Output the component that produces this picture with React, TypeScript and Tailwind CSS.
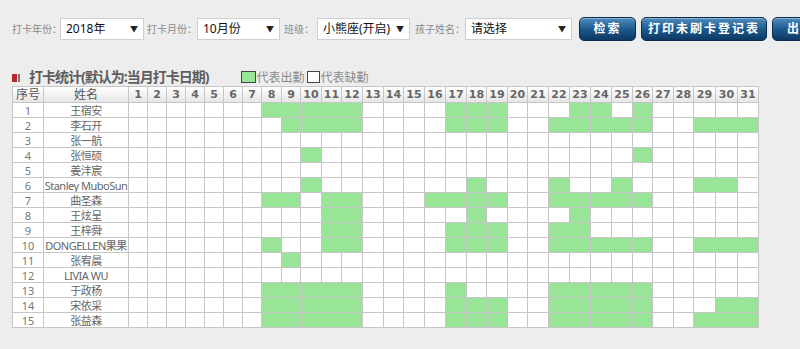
import React from 'react';

const students: { name: string; days: number[] }[] = [
  { name: '王宿安', days: [8, 9, 10, 11, 12, 17, 18, 19, 23, 24, 26] },
  { name: '李石开', days: [9, 10, 11, 12, 17, 18, 19, 22, 23, 24, 25, 26, 29, 30, 31] },
  { name: '张一航', days: [] },
  { name: '张恒硕', days: [10, 26] },
  { name: '姜沣宸', days: [] },
  { name: 'Stanley MuboSun', days: [10, 18, 22, 25, 29, 30] },
  { name: '曲圣森', days: [8, 9, 11, 12, 16, 17, 18, 19, 22, 23, 24, 25, 26] },
  { name: '王炫呈', days: [11, 12, 18, 23] },
  { name: '王梓舜', days: [11, 12, 17, 18, 19, 22, 23] },
  { name: 'DONGELLEN果果', days: [8, 11, 12, 17, 18, 19, 22, 23, 24, 25, 26, 29, 30, 31] },
  { name: '张宥晨', days: [9] },
  { name: 'LIVIA WU', days: [] },
  { name: '于政杨', days: [8, 9, 10, 11, 12, 17, 22, 23, 24, 25, 26] },
  { name: '宋依采', days: [8, 9, 10, 11, 12, 17, 18, 19, 22, 23, 24, 25, 26, 30, 31] },
  { name: '张益森', days: [8, 9, 10, 11, 12, 17, 18, 19, 22, 23, 24, 25, 26, 29, 30, 31] },
];

// measured column widths for day 1..31
const dayWidths = [
  19, 19, 19, 19, 19, 19, 19, 20, 19, 21, 20, 21, 21, 20, 21, 21, 21, 20, 21, 20, 21, 21,
  21, 21, 21, 20, 21, 20, 22, 22, 21,
];

const widthClass: Record<number, string> = {
  19: 'w-[19px]',
  20: 'w-[20px]',
  21: 'w-[21px]',
  22: 'w-[22px]',
};

const days = Array.from({ length: 31 }, (_, i) => i + 1);

function FakeSelect({ value, width }: { value: string; width: string }) {
  return (
    <div
      className={`${width} shrink-0 h-[22px] bg-white border border-[#cfcfcf] flex items-center justify-between pl-[5px] pr-[5px] text-[12px] text-[#111]`}
    >
      <span>{value}</span>
      <span className="text-[8px] text-[#222]">▼</span>
    </div>
  );
}

function Label({ text, width }: { text: string; width: string }) {
  return <span className={`${width} text-[10px] text-[#8a8a8a] shrink-0`}>{text}</span>;
}

function BlueButton({ text, width }: { text: string; width: string }) {
  return (
    <button
      className={`${width} h-[24px] shrink-0 rounded-[5px] border border-[#0a2d4d] bg-gradient-to-b from-[#4f8cbf] via-[#1f5a8f] to-[#0c3963] text-white text-[12px] font-bold tracking-[2px] shadow-[inset_0_1px_0_rgba(255,255,255,0.35)] text-left`}
    >
      {text}
    </button>
  );
}

export default function App() {
  return (
    <div
      className="w-[800px] h-[349px] overflow-hidden bg-[#ededed] whitespace-nowrap"
      style={{ fontFamily: '"Noto Sans", "Noto Sans CJK SC", sans-serif' }}
    >
      {/* toolbar */}
      <div className="flex items-center pl-[12px] pt-[17px] h-[41px]">
        <Label text="打卡年份：" width="w-[48px]" />
        <FakeSelect value="2018年" width="w-[84px]" />
        <span className="w-[3px] shrink-0" />
        <Label text="打卡月份：" width="w-[50px]" />
        <FakeSelect value="10月份" width="w-[83px]" />
        <span className="w-[4px] shrink-0" />
        <Label text="班级：" width="w-[33px]" />
        <FakeSelect value="小熊座(开启)" width="w-[93px]" />
        <span className="w-[5px] shrink-0" />
        <Label text="孩子姓名：" width="w-[50px]" />
        <FakeSelect value="请选择" width="w-[107px]" />
        <div className="flex shrink-0 gap-[5px] ml-[7px]">
          <button className="w-[57px] h-[24px] shrink-0 rounded-[5px] border border-[#0a2d4d] bg-gradient-to-b from-[#4f8cbf] via-[#1f5a8f] to-[#0c3963] text-white text-[12px] font-bold tracking-[2px] shadow-[inset_0_1px_0_rgba(255,255,255,0.35)]">
            检索
          </button>
          <button className="w-[126px] h-[24px] shrink-0 rounded-[5px] border border-[#0a2d4d] bg-gradient-to-b from-[#4f8cbf] via-[#1f5a8f] to-[#0c3963] text-white text-[12px] font-bold tracking-[2px] shadow-[inset_0_1px_0_rgba(255,255,255,0.35)]">
            打印未刷卡登记表
          </button>
          <BlueButton text="　出勤统计" width="w-[80px]" />
        </div>
      </div>

      {/* title */}
      <div className="flex items-end pl-[12px] mt-[26px] h-[18px]">
        <span className="w-[5px] h-[8px] bg-[#b8262b] mb-[3px]" />
        <span className="w-[2px] h-[8px] bg-[#777] ml-[1px] mb-[3px]" />
        <span className="ml-[9px] text-[14px] tracking-[-1px] font-bold text-[#5d5d5d] leading-[16px]">
          打卡统计(默认为:当月打卡日期)
        </span>
        <span className="ml-[33px] w-[15px] h-[12px] bg-[#98e598] border border-[#444] mb-[2px]" />
        <span className="text-[12px] text-[#8a8a8a] leading-[14px]">代表出勤</span>
        <span className="ml-[3px] w-[13px] h-[12px] bg-white border border-[#444] mb-[2px]" />
        <span className="text-[12px] text-[#8a8a8a] leading-[14px]">代表缺勤</span>
      </div>

      {/* table */}
      <div className="pl-[12px] mt-[1px]">
        <table className="table-fixed border-collapse w-[746px] bg-white text-[11px]">
          <colgroup>
            <col className="w-[31px]" />
            <col className="w-[85px]" />
            {dayWidths.map((w, i) => (
              <col key={i} className={widthClass[w]} />
            ))}
          </colgroup>
          <thead>
            <tr className="h-[16px] bg-gradient-to-b from-white to-[#e4e4e4]">
              <th className="border border-[#c6c6c6] p-0 font-normal text-[12px] text-[#555] leading-[14px]">
                序号
              </th>
              <th className="border border-[#c6c6c6] p-0 font-normal text-[12px] text-[#555] leading-[14px]">
                姓名
              </th>
              {days.map(d => (
                <th
                  key={d}
                  className="border border-[#c6c6c6] p-0 text-[11px] font-bold text-[#666] leading-[14px]"
                  style={{ fontFamily: '"DejaVu Sans", sans-serif' }}
                >
                  {d}
                </th>
              ))}
            </tr>
          </thead>
          <tbody>
            {students.map((s, idx) => (
              <tr key={idx} className="h-[15px]">
                <td className="border border-[#c6c6c6] p-0 text-center text-[11px] text-[#777] leading-[13px]">
                  {idx + 1}
                </td>
                <td className="border border-[#c6c6c6] p-0 text-center text-[11px] tracking-[-0.5px] text-[#666] leading-[13px] overflow-hidden">
                  {s.name}
                </td>
                {days.map(d => (
                  <td
                    key={d}
                    className={`border border-[#c6c6c6] p-0 ${s.days.includes(d) ? 'bg-[#98e598]' : 'bg-white'}`}
                  />
                ))}
              </tr>
            ))}
          </tbody>
        </table>
      </div>
    </div>
  );
}
